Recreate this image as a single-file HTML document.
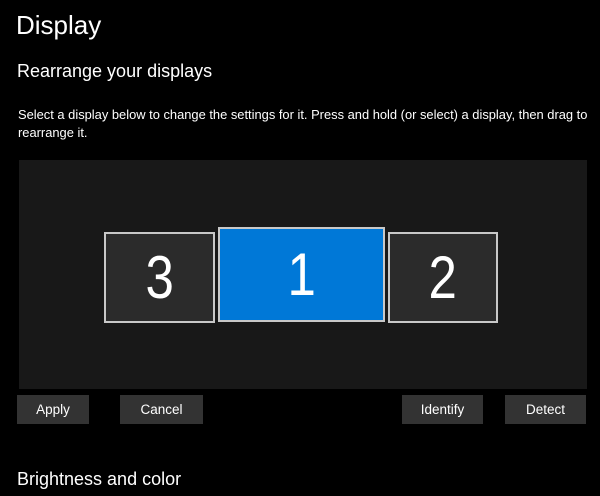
<!DOCTYPE html>
<html><head><style>
html,body{margin:0;padding:0;background:#000;width:600px;height:496px;overflow:hidden;font-family:"Liberation Sans",sans-serif;color:#fff;position:relative}
.a{position:absolute;white-space:nowrap}
.mon{position:absolute;box-sizing:border-box;border:2px solid #c8c8c8;background:#2b2b2b;display:flex;align-items:center;justify-content:center;font-size:60px;font-weight:100;color:#fff}
.mon span{display:inline-block;transform:scaleX(0.85)}
.btn{position:absolute;top:395px;height:29px;background:#333;font-size:13.5px;display:flex;align-items:center;justify-content:center}
</style></head><body>
<div class="a" style="left:16px;top:10px;font-size:26px">Display</div>
<div class="a" style="left:17px;top:61px;font-size:18px">Rearrange your displays</div>
<div class="a" style="left:18px;top:106px;font-size:12.9px;line-height:18px">Select a display below to change the settings for it. Press and hold (or select) a display, then drag to<br>rearrange it.</div>
<div style="position:absolute;left:19px;top:160px;width:568px;height:229px;background:#181818"></div>
<div class="mon" style="left:104px;top:232px;width:111px;height:91px"><span>3</span></div>
<div class="mon" style="left:218px;top:227px;width:167px;height:95px;background:#0078d7"><span>1</span></div>
<div class="mon" style="left:388px;top:232px;width:110px;height:91px"><span>2</span></div>
<div class="btn" style="left:17px;width:72px">Apply</div>
<div class="btn" style="left:120px;width:83px">Cancel</div>
<div class="btn" style="left:402px;width:81px">Identify</div>
<div class="btn" style="left:505px;width:81px">Detect</div>
<div class="a" style="left:17px;top:469px;font-size:18px">Brightness and color</div>
</body></html>
